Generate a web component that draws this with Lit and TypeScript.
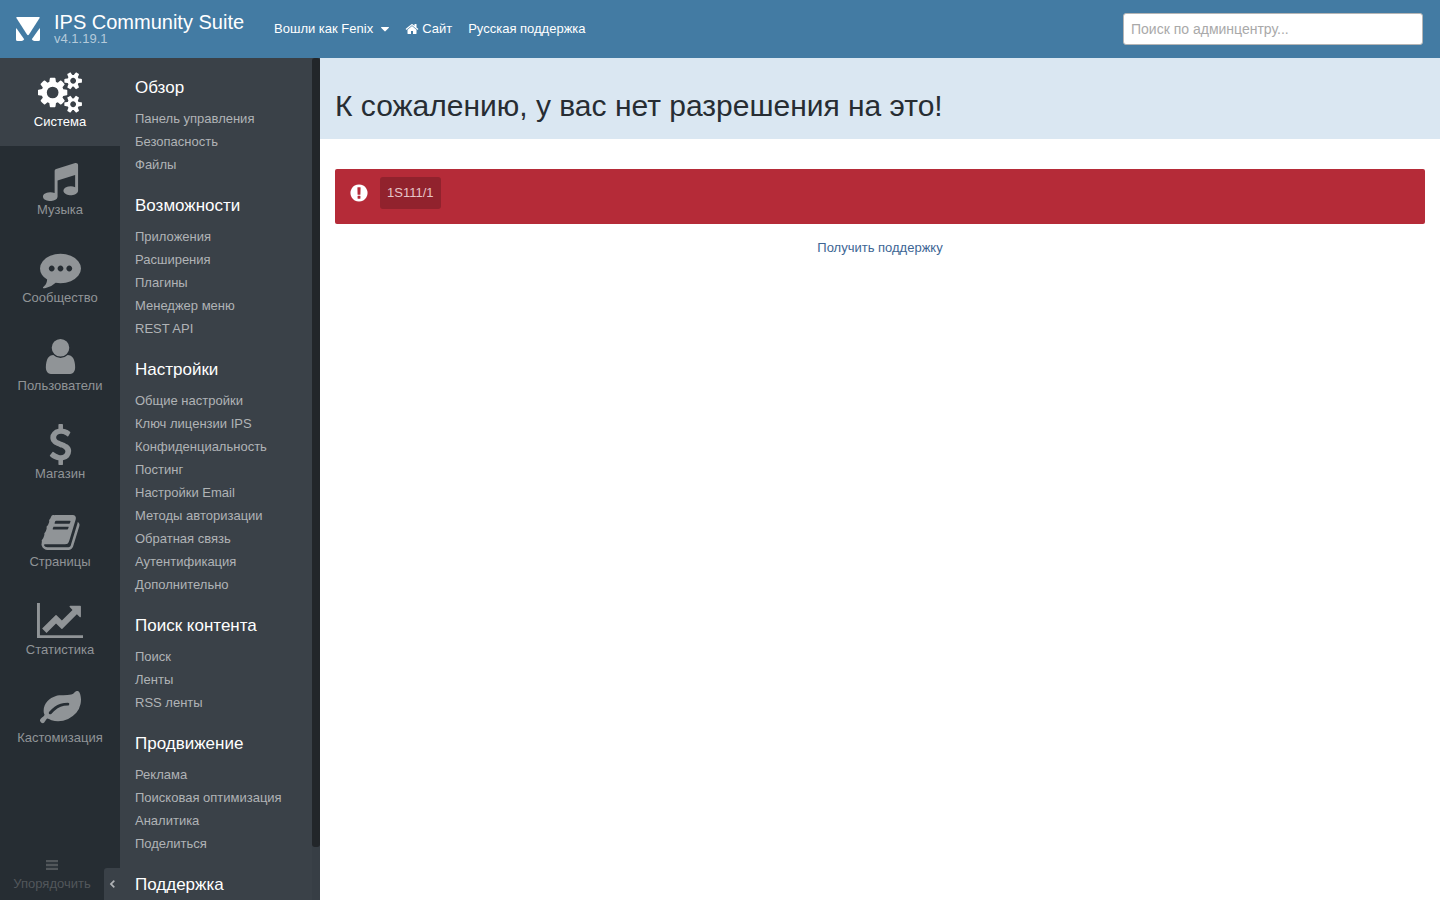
import { LitElement, html, svg, css } from "lit";
import { customElement, property } from "lit/decorators.js";

interface Glyph {
  width: number;
  path: string;
}

const GLYPHS: Record<string, Glyph> = {
  cogs: {
    width: 1920,
    path: "M896 896q0-106-75-181t-181-75-181 75-75 181 75 181 181 75 181-75 75-181zm768 512q0-52-38-90t-90-38-90 38-38 90q0 53 37.5 90.5t90.5 37.5 90.5-37.5 37.5-90.5zm0-1024q0-52-38-90t-90-38-90 38-38 90q0 53 37.5 90.5t90.5 37.5 90.5-37.5 37.5-90.5zm-384 421v185q0 10-7 19.5t-16 10.5l-155 24q-11 35-32 76 34 48 90 115 7 11 7 20 0 12-7 19-23 30-82.5 89.5t-78.5 59.5q-11 0-21-7l-115-90q-37 19-77 31-11 108-23 155-7 24-30 24h-186q-11 0-20-7.5t-10-17.5l-23-153q-34-10-75-31l-118 89q-7 7-20 7-11 0-21-8-144-133-144-160 0-9 7-19 10-14 41-53t47-61q-23-44-35-82l-152-24q-10-1-17-9.5t-7-19.5v-185q0-10 7-19.5t16-10.5l155-24q11-35 32-76-34-48-90-115-7-11-7-20 0-12 7-20 22-30 82-89t79-59q11 0 21 7l115 90q34-18 77-32 11-108 23-154 7-24 30-24h186q11 0 20 7.5t10 17.5l23 153q34 10 75 31l118-89q8-7 20-7 11 0 21 8 144 133 144 160 0 8-7 19-12 16-42 54t-45 60q23 48 34 82l152 23q10 2 17 10.5t7 19.5zm640 533v140q0 16-149 31-12 27-30 52 51 113 51 138 0 4-4 7-122 71-124 71-8 0-46-47t-52-68q-20 2-30 2t-30-2q-14 21-52 68t-46 47q-2 0-124-71-4-3-4-7 0-25 51-138-18-25-30-52-149-15-149-31v-140q0-16 149-31 13-29 30-52-51-113-51-138 0-4 4-7 4-2 35-20t59-34 30-16q8 0 46 46.5t52 67.5q20-2 30-2t30 2q51-71 92-112l6-2q4 0 124 70 4 3 4 7 0 25-51 138 17 23 30 52 149 15 149 31zm0-1024v140q0 16-149 31-12 27-30 52 51 113 51 138 0 4-4 7-122 71-124 71-8 0-46-47t-52-68q-20 2-30 2t-30-2q-14 21-52 68t-46 47q-2 0-124-71-4-3-4-7 0-25 51-138-18-25-30-52-149-15-149-31v-140q0-16 149-31 13-29 30-52-51-113-51-138 0-4 4-7 4-2 35-20t59-34 30-16q8 0 46 46.5t52 67.5q20-2 30-2t30 2q51-71 92-112l6-2q4 0 124 70 4 3 4 7 0 25-51 138 17 23 30 52 149 15 149 31z",
  },
  music: {
    width: 1792,
    path: "M1664 224v1120q0 50-34 89t-86 60.5-103.5 32-96.5 10.5-96.5-10.5-103.5-32-86-60.5-34-89 34-89 86-60.5 103.5-32 96.5-10.5q105 0 192 39v-537l-768 237v709q0 50-34 89t-86 60.5-103.5 32-96.5 10.5-96.5-10.5-103.5-32-86-60.5-34-89 34-89 86-60.5 103.5-32 96.5-10.5q105 0 192 39v-967q0-31 19-56.5t49-35.5l832-256q12-4 28-4 40 0 68 28t28 68z",
  },
  commenting: {
    width: 1792,
    path: "M640 896q0-53-37.5-90.5t-90.5-37.5-90.5 37.5-37.5 90.5 37.5 90.5 90.5 37.5 90.5-37.5 37.5-90.5zm384 0q0-53-37.5-90.5t-90.5-37.5-90.5 37.5-37.5 90.5 37.5 90.5 90.5 37.5 90.5-37.5 37.5-90.5zm384 0q0-53-37.5-90.5t-90.5-37.5-90.5 37.5-37.5 90.5 37.5 90.5 90.5 37.5 90.5-37.5 37.5-90.5zm384 0q0 174-120 321.5t-326 233-450 85.5q-110 0-211-18-173 173-435 229-52 10-86 13-12 1-22-6t-13-18q-4-15 20-37 5-5 23.5-21.5t25.5-23.5 23.5-25.5 24-31.5 20.5-37 20-48 14.5-57.5 12.5-72.5q-146-90-229.5-216.5t-83.5-269.5q0-174 120-321.5t326-233 450-85.5 450 85.5 326 233 120 321.5z",
  },
  user: {
    width: 1792,
    path: "M1536 1399q0 109-62.5 187t-150.5 78h-854q-88 0-150.5-78t-62.5-187q0-85 8.5-160.5t31.5-152 58.5-131 94-89 134.5-34.5q131 128 313 128t313-128q76 0 134.5 34.5t94 89 58.5 131 31.5 152 8.5 160.5zm-256-887q0 159-112.5 271.5t-271.5 112.5-271.5-112.5-112.5-271.5 112.5-271.5 271.5-112.5 271.5 112.5 112.5 271.5z",
  },
  dollar: {
    width: 1792,
    path: "M1362 1185q0 153-99.5 263.5t-258.5 136.5v175q0 14-9 23t-23 9h-135q-13 0-22.5-9.5t-9.5-22.5v-175q-66-9-127.5-31t-101.5-44.5-74-48-46.5-37.5-17.5-18q-17-21-2-41l103-135q7-10 23-12 15-2 24 9l2 2q113 99 243 125 37 8 74 8 81 0 142.5-43t61.5-122q0-28-15-53t-33.5-42-58.5-37.5-66-32-80-32.5q-39-16-61.5-25t-61.5-26.5-62.5-31-56.5-35.5-53.5-42.5-43.5-49-35.5-58-21-66.5-8.5-78q0-138 98-242t255-134v-180q0-13 9.5-22.5t22.5-9.5h135q14 0 23 9t9 23v176q57 6 110.5 23t87 33.5 63.5 37.5 39 29 15 14q17 18 5 38l-81 146q-8 15-23 16-14 3-27-7-3-3-14.5-12t-39-26.5-58.5-32-74.5-26-85.5-11.5q-95 0-155 43t-60 111q0 26 8.5 48t29.5 41.5 39.5 33 56 31 60.5 27 70 27.5q53 20 81 31.5t76 35 75.5 42.5 62 50 53 63.5 31.5 76.5 13 94z",
  },
  book: {
    width: 1792,
    path: "M1703 478q40 57 18 129l-275 906q-19 64-76.5 107.5t-122.5 43.5h-923q-77 0-148.5-53.5t-99.5-131.5q-24-67-2-127 0-4 3-27t4-37q1-8-3-21.5t-3-19.5q2-11 8-21t16.5-23.5 16.5-23.5q23-38 45-91.5t30-91.5q3-10 .5-30t-.5-28q3-11 17-28t17-23q21-36 42-92t25-90q1-9-2.5-32t.5-28q4-13 22-30.5t22-22.5q19-26 42.5-84.5t27.5-96.5q1-8-3-25.5t-2-26.5q2-8 9-18t18-23 17-21q8-12 16.5-30.5t15-35 16-36 19.5-32 26.5-23.5 36-11.5 47.5 5.5l-1 3q38-9 51-9h761q74 0 114 56t18 130l-274 906q-36 119-71.5 153.5t-128.5 34.5h-869q-27 0-38 15-11 16-1 43 24 70 144 70h923q29 0 56-15.5t35-41.5l300-987q7-22 5-57 38 15 59 43zm-1064 2q-4 13 2 22.5t20 9.5h608q13 0 25.5-9.5t16.5-22.5l21-64q4-13-2-22.5t-20-9.5h-608q-13 0-25.5 9.5t-16.5 22.5zm-83 256q-4 13 2 22.5t20 9.5h608q13 0 25.5-9.5t16.5-22.5l21-64q4-13-2-22.5t-20-9.5h-608q-13 0-25.5 9.5t-16.5 22.5z",
  },
  chart: {
    width: 2048,
    path: "M2048 1536v128h-2048v-1536h128v1408h1920zm-128-1248v435q0 21-19.5 29.5t-35.5-7.5l-121-121-633 633q-10 10-23 10t-23-10l-233-233-416 416-192-192 585-585q10-10 23-10t23 10l233 233 464-464-121-121q-16-16-7.5-35.5t29.5-19.5h435q14 0 23 9t9 23z",
  },
  leaf: {
    width: 1792,
    path: "M1280 704q0-26-19-45t-45-19q-172 0-318 49.5t-259.5 134-235.5 219.5q-19 21-19 45 0 26 19 45t45 19q24 0 45-19 27-24 74-71t67-66q137-124 268.5-176t313.5-52q26 0 45-19t19-45zm512-198q0 95-20 193-46 224-184.5 383t-357.5 268q-214 108-438 108-148 0-286-47-15-5-88-42t-96-37q-16 0-39.5 32t-45 70-52.5 70-60 32q-43 0-63.5-17.5t-45.5-59.5q-2-4-6-11t-5.5-10-3-9.5-1.5-13.5q0-35 31-73.5t68-65.5 68-56 31-48q0-4-14-38t-16-44q-9-51-9-104 0-115 43.5-220t119-184.5 170.5-139 204-95.5q55-18 145-25.5t179.5-9 178.5-6 163.5-24 113.5-56.5l29.5-29.5 29.5-28 27-20 36.5-16 43.5-4.5q39 0 70.5 46t47.5 112 24 124 8 96z",
  },
  home: {
    width: 1792,
    path: "M1472 992v480q0 26-19 45t-45 19h-384v-384h-256v384h-384q-26 0-45-19t-19-45v-480q0-1 .5-3t.5-3l575-474 575 474q1 2 1 6zm223-69l-62 74q-8 9-21 11h-3q-13 0-21-7l-692-577-692 577q-12 8-24 7-13-2-21-11l-62-74q-8-10-7-23.5t11-21.5l719-599q32-26 76-26t76 26l244 204v-195q0-14 9-23t23-9h192q14 0 23 9t9 23v408l219 182q10 8 11 21.5t-7 23.5z",
  },
  alert: {
    width: 1792,
    path: "M896 128q209 0 385.5 103t279.5 279.5 103 385.5-103 385.5-279.5 279.5-385.5 103-385.5-103-279.5-279.5-103-385.5 103-385.5 279.5-279.5 385.5-103zm128 1247v-190q0-14-9-23.5t-22-9.5h-192q-13 0-23 10t-10 23v190q0 13 10 23t23 10h192q13 0 22-9.5t9-23.5zm-2-344l18-621q0-12-10-18-10-8-24-8h-220q-14 0-24 8-10 6-10 18l17 621q0 10 10 17.5t24 7.5h185q14 0 23.5-7.5t10.5-17.5z",
  },
  bars: {
    width: 1792,
    path: "M128 256h1536v300H128zM128 746h1536v300H128zM128 1236h1536v300H128z",
  },
  caret: {
    width: 1024,
    path: "M1024 704q0 26-19 45l-448 448q-19 19-45 19t-45-19l-448-448q-19-19-19-45t19-45 45-19h896q26 0 45 19t19 45z",
  },
  left: {
    width: 1792,
    path: "M1250 544q0 20-14 34l-320 318 320 318q14 14 14 34t-14 34l-90 90q-14 14-34 14t-34-14l-442-442q-14-14-14-34t14-34l442-442q14-14 34-14t34 14l90 90q14 14 14 34z",
  },
};

@customElement("acp-icon")
export class AcpIcon extends LitElement {
  @property() name = "cogs";

  static styles = css`
    :host {
      display: inline-flex;
      height: 41px;
    }
    svg {
      display: block;
      height: 100%;
      fill: currentColor;
    }
  `;

  render() {
    const glyph = GLYPHS[this.name];
    return html`<svg viewBox="0 0 ${glyph.width} 1792" aria-hidden="true">
      ${svg`<path d=${glyph.path}></path>`}
    </svg>`;
  }
}

const SECTIONS = [
  { icon: "cogs", label: "Система" },
  { icon: "music", label: "Музыка" },
  { icon: "commenting", label: "Сообщество" },
  { icon: "user", label: "Пользователи" },
  { icon: "dollar", label: "Магазин" },
  { icon: "book", label: "Страницы" },
  { icon: "chart", label: "Статистика" },
  { icon: "leaf", label: "Кастомизация" },
];

const GROUPS = [
  { title: "Обзор", items: ["Панель управления", "Безопасность", "Файлы"] },
  {
    title: "Возможности",
    items: ["Приложения", "Расширения", "Плагины", "Менеджер меню", "REST API"],
  },
  {
    title: "Настройки",
    items: [
      "Общие настройки",
      "Ключ лицензии IPS",
      "Конфиденциальность",
      "Постинг",
      "Настройки Email",
      "Методы авторизации",
      "Обратная связь",
      "Аутентификация",
      "Дополнительно",
    ],
  },
  { title: "Поиск контента", items: ["Поиск", "Ленты", "RSS ленты"] },
  {
    title: "Продвижение",
    items: ["Реклама", "Поисковая оптимизация", "Аналитика", "Поделиться"],
  },
  { title: "Поддержка", items: [] },
];

@customElement("app-root")
export class AppRoot extends LitElement {
  static styles = css`
    :host {
      display: flex;
      flex-direction: column;
      height: 100vh;
      overflow: hidden;
      background: #fff;
      color: #272d33;
      font: 13px/20px "Liberation Sans", Arial, sans-serif;
    }
    * {
      box-sizing: border-box;
    }
    a {
      color: inherit;
      text-decoration: none;
    }
    button {
      border: 0;
      padding: 0;
      background: none;
      color: inherit;
      font: inherit;
      cursor: pointer;
    }
    ul,
    h1,
    h2,
    p {
      margin: 0;
      padding: 0;
      list-style: none;
      font-weight: 400;
    }

    .top {
      flex: none;
      display: flex;
      align-items: center;
      height: 58px;
      padding: 0 17px 0 16px;
      background: #437ba3;
      color: #fff;
    }
    .brand {
      display: flex;
      align-items: center;
      gap: 14px;
    }
    .logo {
      display: block;
      width: 24px;
      height: 24px;
      fill: #fff;
    }
    .names {
      display: flex;
      flex-direction: column;
    }
    .product {
      font-size: 20px;
      line-height: 20px;
    }
    .version {
      font-size: 13px;
      line-height: 14px;
      color: #b4cada;
    }
    .links {
      display: flex;
      align-items: center;
      gap: 16px;
      margin-left: 30px;
      line-height: 22px;
    }
    .links a,
    .links button {
      display: flex;
      align-items: center;
      gap: 3px;
    }
    .links button {
      gap: 8px;
    }
    .small {
      height: 14px;
    }
    .search {
      width: 300px;
      height: 32px;
      margin-left: auto;
      padding: 0 7px;
      border: 1px solid #b5b5b5;
      border-radius: 3px;
      background: #fff;
      color: #333;
      font: 14px "Liberation Sans", Arial, sans-serif;
    }
    .search::placeholder {
      color: #a9a9a9;
      opacity: 1;
    }

    .body {
      flex: 1;
      min-height: 0;
      display: flex;
    }
    .sections {
      position: relative;
      flex: none;
      display: flex;
      flex-direction: column;
      width: 120px;
      background: #262d33;
      color: #909497;
    }
    .section {
      display: flex;
      flex-direction: column;
      align-items: center;
      height: 88px;
      padding-top: 14px;
      line-height: 18px;
    }
    .section.active {
      background: #3a4148;
      color: #fff;
    }
    .reorder {
      display: flex;
      flex-direction: column;
      align-items: center;
      width: 104px;
      margin-top: auto;
      padding-bottom: 8px;
      line-height: 17px;
      color: #52575b;
    }
    .reorder acp-icon {
      height: 14px;
      margin-bottom: 3px;
    }
    .collapse {
      position: absolute;
      right: 0;
      bottom: 0;
      display: flex;
      align-items: center;
      justify-content: center;
      width: 16px;
      height: 32px;
      border-radius: 3px 0 0 0;
      background: #3a4148;
      color: #b0b3b6;
    }

    .menu {
      flex: none;
      display: flex;
      width: 200px;
      background: #3a4148;
    }
    .groups {
      flex: 1;
      display: flex;
      flex-direction: column;
      gap: 20px;
      padding: 20px 0 0 15px;
      overflow: hidden;
    }
    .group {
      flex: none;
      display: flex;
      flex-direction: column;
      gap: 9px;
    }
    .group h2 {
      font-size: 17px;
      line-height: 20px;
      color: #fff;
    }
    .group a {
      display: block;
      line-height: 23px;
      color: #b0b3b6;
    }
    .track {
      width: 8px;
      background: #373e45;
    }
    .thumb {
      height: 93.7%;
      border-radius: 3px;
      background: #22262a;
    }

    main {
      flex: 1;
      min-width: 0;
    }
    .heading {
      padding: 30px 15px 15px;
      background: #dae7f2;
    }
    .heading h1 {
      font-size: 30px;
      line-height: 36px;
    }
    .content {
      display: flex;
      flex-direction: column;
      gap: 14px;
      padding: 30px 15px;
    }
    .alert {
      display: flex;
      align-items: flex-start;
      gap: 11px;
      padding: 8px 14px 15px;
      border-radius: 2px;
      background: #b52b38;
      color: #fff;
    }
    .alert acp-icon {
      height: 20px;
      margin-top: 6px;
    }
    .code {
      padding: 6px 7px;
      border-radius: 3px;
      background: #91222d;
      color: #e6c4c7;
    }
    .support {
      text-align: center;
      color: #3d6594;
    }
  `;

  render() {
    return html`
      <header class="top">
        <a class="brand" href="#">
          <svg class="logo" viewBox="0 0 24 24" aria-hidden="true">
            <path d="M1 0h22q1.200 0 .6 1.100L13 17.500q-1 1.500-2 0L.4 1.100Q-.2 0 1 0z" />
            <path d="M0 12q0-1.300.8-.2l7.400 10.400q-.9 1.800-2.700 1.800H1.500Q0 24 0 22.500z" />
            <path d="M24 12q0-1.300-.8-.2l-7.400 10.400q.9 1.800 2.700 1.800h4q1.500 0 1.500-1.500z" />
          </svg>
          <span class="names">
            <span class="product">IPS Community Suite</span>
            <span class="version">v4.1.19.1</span>
          </span>
        </a>
        <nav class="links">
          <button type="button">
            Вошли как Fenix <acp-icon class="small" name="caret"></acp-icon>
          </button>
          <a href="#"><acp-icon class="small" name="home"></acp-icon>Сайт</a>
          <a href="#">Русская поддержка</a>
        </nav>
        <input
          class="search"
          type="search"
          aria-label="Поиск по админцентру"
          placeholder="Поиск по админцентру..."
        />
      </header>
      <div class="body">
        <nav class="sections">
          ${SECTIONS.map(
            (s, i) => html`<a class="section ${i === 0 ? "active" : ""}" href="#">
              <acp-icon name=${s.icon}></acp-icon><span>${s.label}</span>
            </a>`
          )}
          <button class="reorder" type="button">
            <acp-icon name="bars"></acp-icon>Упорядочить
          </button>
          <button class="collapse" type="button" aria-label="Свернуть меню">
            <acp-icon class="small" name="left"></acp-icon>
          </button>
        </nav>
        <nav class="menu">
          <div class="groups">
            ${GROUPS.map(
              (g) => html`<section class="group">
                <h2>${g.title}</h2>
                <ul>
                  ${g.items.map((item) => html`<li><a href="#">${item}</a></li>`)}
                </ul>
              </section>`
            )}
          </div>
          <div class="track"><div class="thumb"></div></div>
        </nav>
        <main>
          <div class="heading"><h1>К сожалению, у вас нет разрешения на это!</h1></div>
          <div class="content">
            <div class="alert" role="alert">
              <acp-icon name="alert"></acp-icon>
              <span class="code">1S111/1</span>
            </div>
            <p class="support"><a href="#">Получить поддержку</a></p>
          </div>
        </main>
      </div>
    `;
  }
}
